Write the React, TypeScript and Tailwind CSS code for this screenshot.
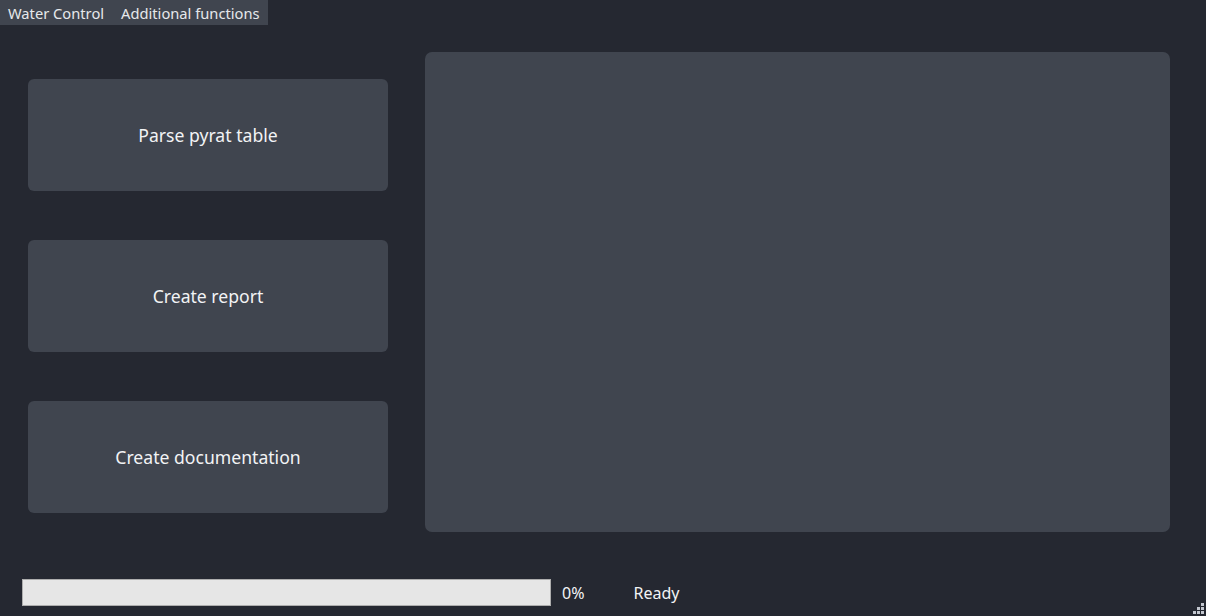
import React from "react";

const font = { fontFamily: '"Noto Sans", "Open Sans", sans-serif' };

function Btn({ label }: { label: string }) {
  return (
    <button className="w-[360px] h-[112px] rounded-[6px] bg-[#40454f] text-[#f2f3f5] text-[17.6px] flex items-center justify-center">
      {label}
    </button>
  );
}

export default function App() {
  return (
    <div
      className="relative w-[1206px] h-[616px] bg-[#252831] flex flex-col overflow-hidden"
      style={font}
    >
      <div className="flex h-[25px]">
        <div className="flex items-center bg-[#40454f] text-[#e6e8eb] text-[14.7px] h-[25px] pl-[8px] pr-[8px] pt-[1px] gap-[17px]">
          <span>Water Control</span>
          <span>Additional functions</span>
        </div>
      </div>
      <div className="flex pt-[27px] pl-[28px] pr-[36px]">
        <div className="flex flex-col gap-[49px] pt-[27px]">
          <Btn label="Parse pyrat table" />
          <Btn label="Create report" />
          <Btn label="Create documentation" />
        </div>
        <div className="ml-[37px] flex-1 h-[480px] rounded-[7px] bg-[#40454f]" />
      </div>
      <div className="flex items-center pl-[22px] mt-[47px]">
        <div className="w-[529px] h-[27px] bg-[#e6e6e6] border border-[#adadad]" />
        <span className="ml-[11px] text-[16px] text-[#f2f3f5]">0%</span>
        <span className="ml-[49px] text-[16px] text-[#f2f3f5]">Ready</span>
      </div>
      <svg
        className="absolute right-[2px] bottom-[2px]"
        width="11"
        height="11"
        viewBox="0 0 11 11"
      >
        <g fill="#c3c7cf">
          <rect x="8" y="0" width="3" height="3" />
          <rect x="4" y="4" width="3" height="3" />
          <rect x="8" y="4" width="3" height="3" />
          <rect x="0" y="8" width="3" height="3" />
          <rect x="4" y="8" width="3" height="3" />
          <rect x="8" y="8" width="3" height="3" />
        </g>
      </svg>
    </div>
  );
}
